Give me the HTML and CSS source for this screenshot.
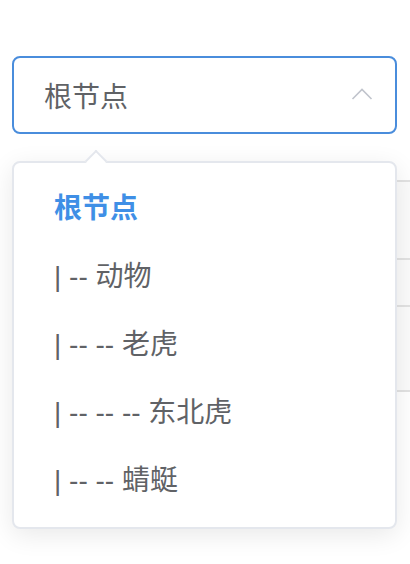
FILE: index.html
```html
<!DOCTYPE html>
<html lang="zh-CN">
<head>
<meta charset="utf-8">
<title>Select</title>
<link rel="stylesheet" href="styles.css">
</head>
<body>
<div class="page">
  <div class="select-wrap">
    <div class="select">
      <span class="select-value">根节点</span>
      <svg class="chevron" width="22" height="12" viewBox="0 0 22 12"><polyline points="1.5,11 11,1.5 20.5,11" fill="none" stroke="#c0c4cc" stroke-width="1.6"/></svg>
    </div>
    <div class="dropdown">
      <div class="arrow"></div>
      <ul class="options">
        <li class="option selected">根节点</li>
        <li class="option">| -- 动物</li>
        <li class="option">| -- -- 老虎</li>
        <li class="option">| -- -- -- 东北虎</li>
        <li class="option">| -- -- 蜻蜓</li>
      </ul>
    </div>
  </div>
  <div class="table">
    <div class="row r1"></div>
    <div class="row r2"></div>
    <div class="row r3"></div>
  </div>
</div>
</body>
</html>
```

FILE: styles.css
```css
html, body {
  margin: 0;
  padding: 0;
  background: #ffffff;
}
body {
  font-family: "Liberation Sans", "Noto Sans CJK SC", sans-serif;
  color: #606266;
}
.page {
  box-sizing: border-box;
  width: 410px;
  min-height: 564px;
  padding-top: 56px;
  padding-left: 12px;
  overflow: hidden;
}
.select-wrap {
  position: relative;
  width: 385px;
  z-index: 2;
}
.select {
  box-sizing: border-box;
  height: 78px;
  border: 2px solid #4a8ddc;
  border-radius: 8px;
  background: #fff;
  display: flex;
  align-items: center;
  justify-content: space-between;
  padding: 0 22px 0 30px;
}
.select-value {
  font-size: 28px;
  color: #606266;
}
.chevron {
  display: block;
  margin-top: -2px;
}
.dropdown {
  position: absolute;
  top: 105px;
  left: 0;
  width: 385px;
  box-sizing: border-box;
  background: #fff;
  border: 2px solid #e4e7ed;
  border-radius: 8px;
  box-shadow: 0 6px 26px rgba(0, 0, 0, 0.09);
}
.arrow {
  position: absolute;
  top: -10px;
  left: 74px;
  width: 16px;
  height: 16px;
  box-sizing: border-box;
  background: #fff;
  border-top: 2px solid #e4e7ed;
  border-left: 2px solid #e4e7ed;
  transform: rotate(45deg);
}
.options {
  list-style: none;
  margin: 0;
  padding: 12px 0;
  position: relative;
}
.option {
  height: 68px;
  line-height: 68px;
  padding: 0 40px;
  font-size: 28px;
  color: #606266;
  white-space: nowrap;
}
.option.selected {
  color: #3f8fe6;
  font-weight: bold;
}
.table {
  margin-top: 46px;
  width: 420px;
  background: #fbfbfb;
  border-bottom: 2px solid #e2e2e2;
  position: relative;
  z-index: 1;
}
.row {
  border-top: 2px solid #e2e2e2;
  box-sizing: border-box;
}
.r1 { height: 78px; }
.r2 { height: 47px; }
.r3 { height: 85px; }
```
